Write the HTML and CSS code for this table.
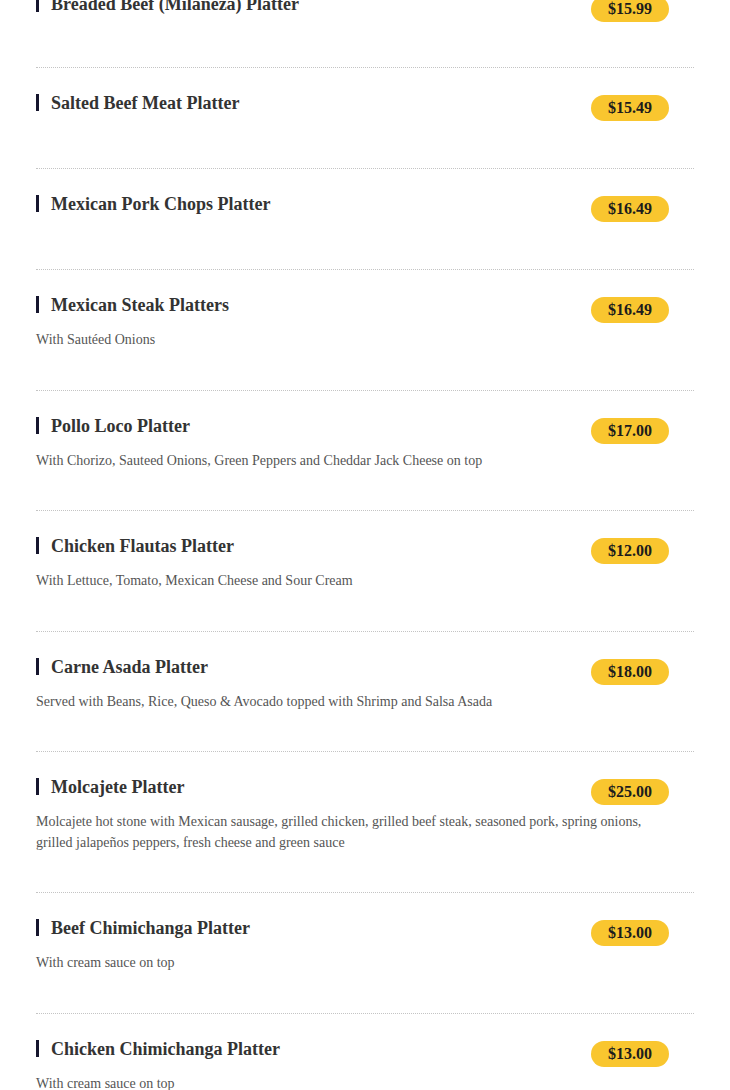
FILE: index.html
```html
<!DOCTYPE html>
<html lang="en">
<head>
<meta charset="utf-8">
<title>Platters</title>
<link rel="stylesheet" href="styles.css">
</head>
<body>
<div class="menu">
  <div class="item">
    <div class="row"><h3 class="title">Breaded Beef (Milaneza) Platter</h3><span class="price">$15.99</span></div>
  </div>
  <div class="item">
    <div class="row"><h3 class="title">Salted Beef Meat Platter</h3><span class="price">$15.49</span></div>
  </div>
  <div class="item">
    <div class="row"><h3 class="title">Mexican Pork Chops Platter</h3><span class="price">$16.49</span></div>
  </div>
  <div class="item">
    <div class="row"><h3 class="title">Mexican Steak Platters</h3><span class="price">$16.49</span></div>
    <p class="desc">With Sautéed Onions</p>
  </div>
  <div class="item">
    <div class="row"><h3 class="title">Pollo Loco Platter</h3><span class="price">$17.00</span></div>
    <p class="desc">With Chorizo, Sauteed Onions, Green Peppers and Cheddar Jack Cheese on top</p>
  </div>
  <div class="item">
    <div class="row"><h3 class="title">Chicken Flautas Platter</h3><span class="price">$12.00</span></div>
    <p class="desc">With Lettuce, Tomato, Mexican Cheese and Sour Cream</p>
  </div>
  <div class="item">
    <div class="row"><h3 class="title">Carne Asada Platter</h3><span class="price">$18.00</span></div>
    <p class="desc">Served with Beans, Rice, Queso &amp; Avocado topped with Shrimp and Salsa Asada</p>
  </div>
  <div class="item">
    <div class="row"><h3 class="title">Molcajete Platter</h3><span class="price">$25.00</span></div>
    <p class="desc">Molcajete hot stone with Mexican sausage, grilled chicken, grilled beef steak, seasoned pork, spring onions, grilled jalapeños peppers, fresh cheese and green sauce</p>
  </div>
  <div class="item">
    <div class="row"><h3 class="title">Beef Chimichanga Platter</h3><span class="price">$13.00</span></div>
    <p class="desc">With cream sauce on top</p>
  </div>
  <div class="item">
    <div class="row"><h3 class="title">Chicken Chimichanga Platter</h3><span class="price">$13.00</span></div>
    <p class="desc">With cream sauce on top</p>
  </div>
</div>
</body>
</html>
```
FILE: styles.css
```css
html, body {
  margin: 0;
  padding: 0;
  background: #ffffff;
}
body {
  font-family: "Liberation Serif", "Times New Roman", serif;
  overflow: hidden;
}
.menu {
  margin: -31px 36px 0 36px;
}
.item {
  padding: 24px 0 40px 0;
  border-bottom: 1px dotted #c4c4c4;
}
.item:first-child {
  padding-bottom: 38px;
}
.row {
  display: flex;
  justify-content: space-between;
  align-items: flex-start;
  margin-bottom: 7px;
}
.title {
  position: relative;
  margin: 0;
  padding-left: 15px;
  font-size: 18px;
  line-height: 22px;
  font-weight: bold;
  color: #333333;
}
.title::before {
  content: "";
  position: absolute;
  left: 0;
  top: 2px;
  width: 3px;
  height: 17px;
  background: #16162e;
}
.price {
  margin: 3px 25px 0 0;
  height: 26px;
  line-height: 26px;
  padding: 0 17px;
  border-radius: 13px;
  background: #f9c62f;
  color: #1c1c1c;
  font-size: 16px;
  font-weight: bold;
}
.desc {
  margin: 0 0 -1px 0;
  padding-right: 25px;
  font-size: 14px;
  line-height: 20.5px;
  color: #555555;
}
```
